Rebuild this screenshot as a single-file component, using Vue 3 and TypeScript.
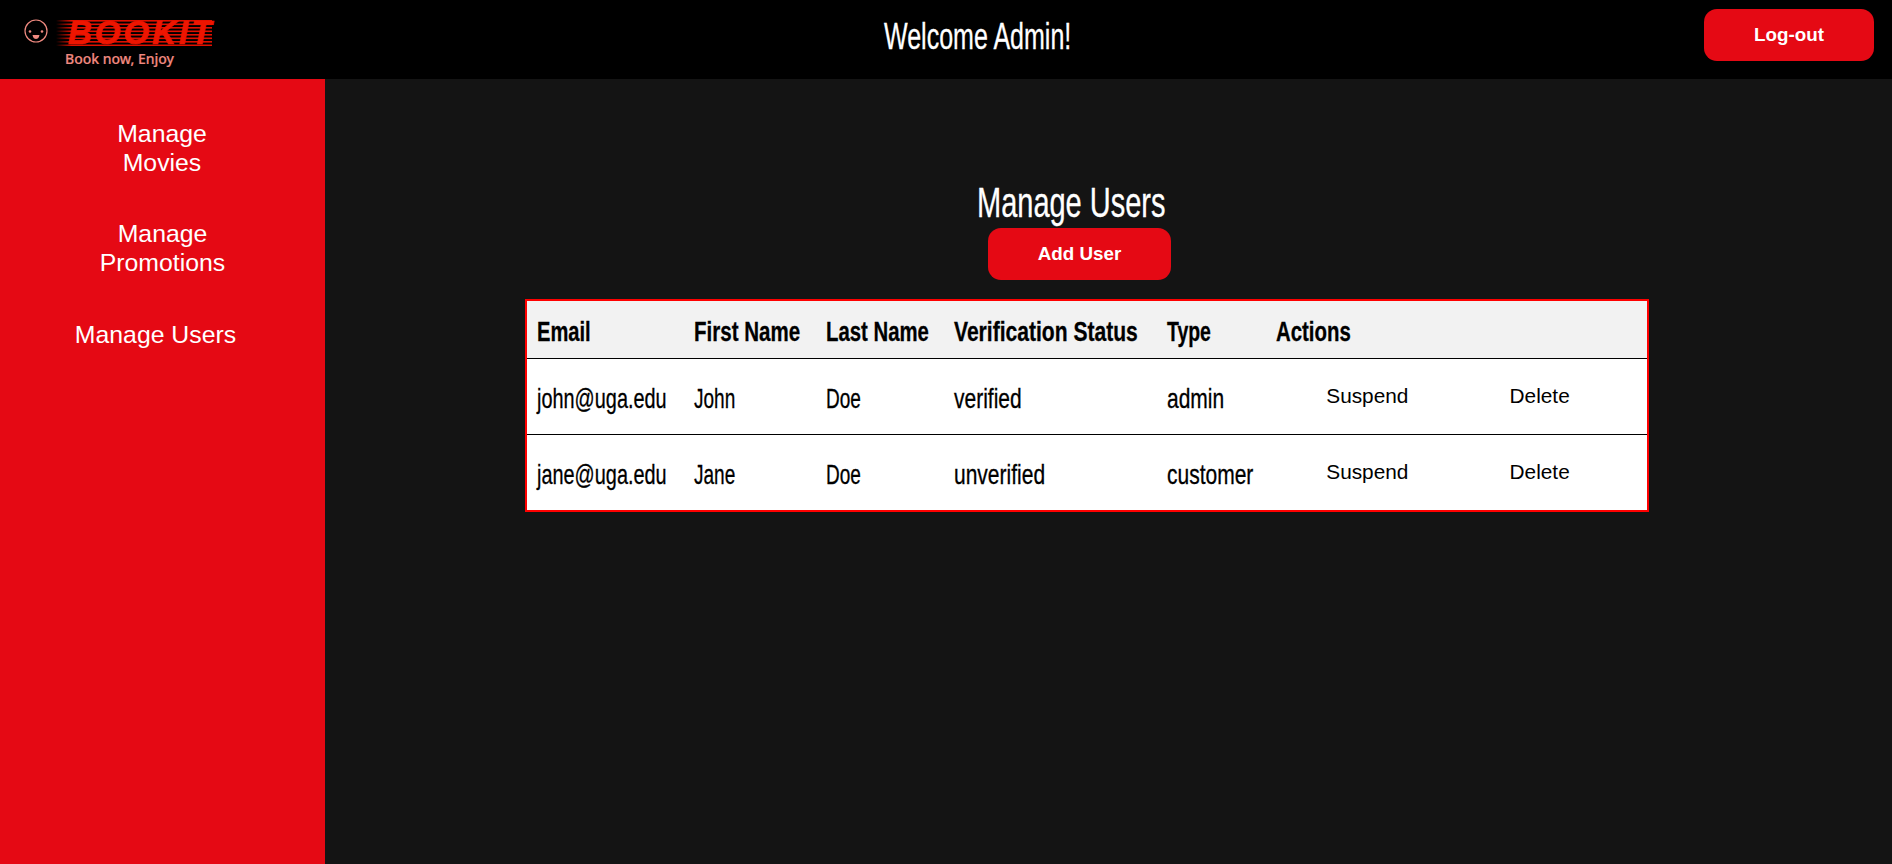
<template>
  <div class="page">
    <header class="topbar">
      <div class="logo">
        <svg class="face" width="24" height="24" viewBox="0 0 24 24" fill="none">
          <circle cx="12" cy="12" r="11" stroke="#f08a80" stroke-width="1.200" />
          <circle cx="6" cy="12.500" r="1.300" fill="#f08a80" />
          <circle cx="18" cy="12.500" r="1.300" fill="#f08a80" />
          <path d="M8.500 16h7c-.5 3-2.200 4-3.500 4s-3-1-3.500-4z" fill="#f08a80" />
        </svg>
        <div class="logo-text">
          <div class="brand-row">
            <svg class="speed" width="158" height="26" viewBox="0 0 158 26">
              <defs>
                <linearGradient id="fade" x1="0" x2="1" y1="0" y2="0">
                  <stop offset="0" stop-color="#e01000" stop-opacity="0" />
                  <stop offset="0.1" stop-color="#e01000" />
                </linearGradient>
              </defs>
              <rect v-for="y in speedLines" :key="y" x="0" :y="y" width="156" height="1.600" fill="url(#fade)" />
            </svg>
            <span class="brand">BOOKIT</span>
          </div>
          <div class="tagline">Book now, Enjoy</div>
        </div>
      </div>
      <h2 class="welcome"><span class="cond">Welcome Admin!</span></h2>
      <button class="btn logout">Log-out</button>
    </header>

    <div class="body-row">
      <aside class="sidebar">
        <a class="side-link first">Manage<br />Movies</a>
        <a class="side-link second">Manage<br />Promotions</a>
        <a class="side-link third">Manage Users</a>
      </aside>

      <main class="content">
        <h1 class="title"><span class="cond">Manage Users</span></h1>
        <button class="btn add">Add User</button>
        <table class="users">
          <colgroup>
            <col v-for="w in colWidths" :key="w" :style="{ width: w + 'px' }" />
          </colgroup>
          <thead>
            <tr>
              <th
                v-for="h in headers"
                :key="h.label"
                :colspan="h.span"
              >
                <span class="cond" :style="{ transform: `scaleX(${h.squeeze})` }">{{ h.label }}</span>
              </th>
            </tr>
          </thead>
          <tbody>
            <tr v-for="u in users" :key="u.email">
              <td class="mail"><span class="cond">{{ u.email }}</span></td>
              <td class="name"><span class="cond">{{ u.first }}</span></td>
              <td class="name"><span class="cond">{{ u.last }}</span></td>
              <td><span class="cond">{{ u.status }}</span></td>
              <td><span class="cond">{{ u.type }}</span></td>
              <td class="action suspend">Suspend</td>
              <td class="action remove">Delete</td>
            </tr>
          </tbody>
        </table>
      </main>
    </div>
  </div>
</template>

<script setup lang="ts">
interface User {
  email: string
  first: string
  last: string
  status: string
  type: string
}

interface Header {
  label: string
  squeeze: number
  span?: number
}

const headers: Header[] = [
  { label: 'Email', squeeze: 0.745 },
  { label: 'First Name', squeeze: 0.76 },
  { label: 'Last Name', squeeze: 0.753 },
  { label: 'Verification Status', squeeze: 0.78 },
  { label: 'Type', squeeze: 0.72 },
  { label: 'Actions', squeeze: 0.755, span: 2 },
]

const users: User[] = [
  { email: 'john@uga.edu', first: 'John', last: 'Doe', status: 'verified', type: 'admin' },
  { email: 'jane@uga.edu', first: 'Jane', last: 'Doe', status: 'unverified', type: 'customer' },
]

const colWidths = [158, 132, 127, 213, 109, 183, 198]
const speedLines = [0, 3.500, 7, 10.500, 14, 17.500, 21, 24.500]
</script>

<style>
html,
body {
  margin: 0;
  background: #141414;
}
</style>

<style scoped>
.page {
  height: 864px;
  display: flex;
  flex-direction: column;
  font-family: "Liberation Sans", Arial, sans-serif;
  color: #fff;
  overflow: hidden;
}

.topbar {
  height: 79px;
  flex: none;
  background: #000;
  display: flex;
  align-items: flex-start;
  justify-content: space-between;
  padding: 0 18px 0 24px;
  position: relative;
}

/* no condensed face installed, so squeeze the sans horizontally */
.cond {
  display: inline-block;
  transform-origin: left center;
  transform: scaleX(0.75);
  -webkit-text-stroke: 0.3px currentColor;
}

.logo {
  display: flex;
  gap: 8px;
  padding-top: 19px;
  align-items: flex-start;
}

.brand-row {
  position: relative;
  width: 160px;
  height: 27px;
}

.speed {
  position: absolute;
  left: 0;
  top: 1px;
}

.brand {
  position: absolute;
  left: 12px;
  top: -3px;
  font: italic 700 33px/33px "Liberation Sans", sans-serif;
  letter-spacing: 3px;
  color: #ee1500;
  -webkit-text-stroke: 0.7px #ee1500;
}

.tagline {
  font: 500 14px/16px "Noto Sans", sans-serif;
  color: #f08a80;
  margin: 5px 0 0 9px;
  -webkit-text-stroke: 0.2px #f08a80;
}

.welcome {
  position: absolute;
  left: 884px;
  top: 18px;
  margin: 0;
  font: 400 36px/38px "Liberation Sans", sans-serif;
}

.welcome .cond {
  transform: scaleX(0.695);
}

.btn {
  border: none;
  background: #e50914;
  color: #fff;
  font: 700 18.800px "Liberation Sans", Arial, sans-serif;
  border-radius: 13px;
}

.logout {
  width: 170px;
  height: 52px;
  margin-top: 9px;
}

.body-row {
  flex: 1;
  display: flex;
}

.sidebar {
  width: 325px;
  flex: none;
  background: #e50914;
  display: flex;
  flex-direction: column;
  font-size: 24.800px;
  line-height: 29px;
  text-align: center;
}

.side-link.first {
  margin: 40px 0 0 -1px;
}

.side-link.second {
  margin-top: 42px;
}

.side-link.third {
  margin: 43px 0 0 -14px;
}

.content {
  flex: 1;
  display: flex;
  flex-direction: column;
  align-items: flex-start;
  padding: 100px 0 0 200px;
}

.title {
  margin: 0 0 0 452px;
  font: 400 42px/48px "Liberation Sans", sans-serif;
  white-space: nowrap;
}

.title .cond {
  transform: scaleX(0.69);
}

.add {
  width: 183px;
  height: 52px;
  margin: 1px 0 19px 463px;
}

.users {
  width: 1124px;
  table-layout: fixed;
  border-collapse: collapse;
  border: 2px solid #f00;
  background: #fff;
  color: #000;
  font: 400 28px/32px "Liberation Sans", sans-serif;
}

th,
td {
  padding: 4px 0 0 10px;
  text-align: left;
  white-space: nowrap;
}

th {
  height: 53px;
  background: #f2f2f2;
  font-size: 27px;
  font-weight: 700;
}

td .cond {
  transform: scaleX(0.75);
}

td.mail .cond {
  transform: scaleX(0.71);
}

td.name .cond {
  transform: scaleX(0.68);
}

thead tr {
  border-bottom: 1px solid #000;
}

td {
  height: 71px;
}

tbody tr + tr {
  border-top: 1px solid #000;
}

.action {
  font: 400 20.800px/24px "Liberation Sans", Arial, sans-serif;
  padding: 0 0 2px;
  height: 73px;
}

.suspend {
  padding-left: 60px;
}

.remove {
  padding-left: 60px;
}
</style>
